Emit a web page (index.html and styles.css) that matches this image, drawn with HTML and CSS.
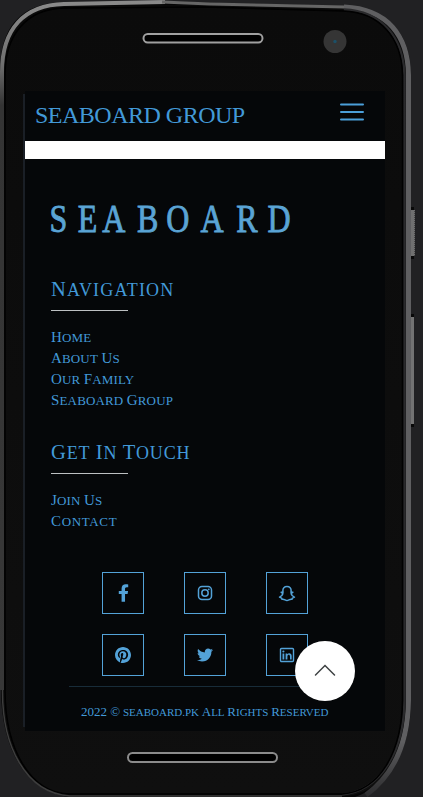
FILE: index.html
```html
<!DOCTYPE html>
<html lang="en">
<head>
<meta charset="utf-8">
<title>Seaboard Group</title>
<link rel="stylesheet" href="styles.css">
</head>
<body>
<div class="stage">
  <svg class="device" viewBox="0 0 423 797" aria-hidden="true">
    <defs>
      <linearGradient id="rim" x1="0" y1="0" x2="0" y2="1">
        <stop offset="0" stop-color="#8a8a8a"/>
        <stop offset=".09" stop-color="#707070"/>
        <stop offset=".15" stop-color="#343434"/>
        <stop offset="1" stop-color="#383838"/>
      </linearGradient>
      <linearGradient id="edge" gradientUnits="userSpaceOnUse" x1="0" y1="0" x2="0" y2="797">
        <stop offset="0" stop-color="#5f5f61"/>
        <stop offset=".93" stop-color="#5f5f61"/>
        <stop offset="1" stop-color="#2c2c2e"/>
      </linearGradient>
      <linearGradient id="glass" x1="0" y1="0" x2="0" y2="1">
        <stop offset="0" stop-color="#0b0b0b"/>
        <stop offset="1" stop-color="#0f0f0f"/>
      </linearGradient>
    </defs>
    <path d="M0 72C0 28 20 3 64 2L165 1L220 3L345 6C390 8 411 35 411 75V700C411 750 390 785 355 797H75C28 797 1 750 1 690L0 690Z" fill="#050505"/>
    <path d="M3 690V72C3 30 25 7 64 6L205 5L345 8C384 9 406 35 407 75V700C407 754 383 793 345 796H75C30 796 3 750 3 690Z" fill="url(#glass)"/>
    <path d="M2 690V72C2 29 24 5 64 4L165 2" fill="none" stroke="url(#rim)" stroke-width="4"/>
    <path d="M162 2L210 4L345 7" fill="none" stroke="#666" stroke-width="3"/>
    <path d="M344 7C388 9 408 36 408.500 75V700C408 745 392 776 366 795" fill="none" stroke="url(#edge)" stroke-width="5"/>
    <path d="M344 9.500C382 11 403 38 404.500 75V700C404 752 380 791 342 794.500" fill="none" stroke="#2a2a2c" stroke-width="2.500"/>
    <path d="M5 690V75C5 34 27 9 64 8L205 7L343 11C380 12 402 38 402.500 75V700C402 752 380 791 342 794H70C31 794 5 750 5 690Z" fill="none" stroke="#010101" stroke-width="1.500"/>
    <path d="M2.500 690C2 745 25 793 70 796H342" fill="none" stroke="#3d3d3d" stroke-width="1.500"/>
    <rect x="411" y="207" width="3" height="52" fill="#080808"/>
    <rect x="411" y="210" width="4" height="46" fill="#707070"/>
    <path d="M414.500 211V256" stroke="#444" stroke-dasharray="1 1"/>
    <rect x="411" y="314" width="3" height="113" fill="#080808"/>
    <rect x="411" y="317" width="3" height="107" fill="#737373"/>
    <rect x="143.500" y="34" width="119" height="8.500" rx="4.250" fill="#000" stroke="#a0a0a0" stroke-width="2"/>
    <rect x="128" y="753" width="149" height="9" rx="4.500" fill="#000" stroke="#8b8b8b" stroke-width="2"/>
    <circle cx="335" cy="41.500" r="11.500" fill="#353535"/>
    <circle cx="335" cy="41.500" r="1.700" fill="#1c5068"/>
    <path d="M24 94V727" stroke="#1a1f26" stroke-width="2"/>
  </svg>

  <main class="screen">
    <header class="bar">
      <span class="brand">SEABOARD GROUP</span>
      <svg class="burger" width="24" height="20" viewBox="0 0 24 20"><path d="M1 2.500H23M1 10H23M1 17.500H23"/></svg>
    </header>
    <div class="strip"></div>
    <footer class="footer">
      <svg class="logo" width="246" height="32" viewBox="0 0 246 32" role="img" aria-label="Seaboard">
        <text transform="scale(.8 1)" x="-2 33.500 64 107.500 144 187 231.500 270.500" y="29">SEABOARD</text>
      </svg>

      <section class="group">
        <h2 class="heading wide"><span class="word">Navigation</span></h2>
        <ul class="links">
          <li><span class="word">Home</span></li>
          <li><span class="word">About</span> <span class="word">Us</span></li>
          <li><span class="word">Our</span> <span class="word">Family</span></li>
          <li><span class="word">Seaboard</span> <span class="word">Group</span></li>
        </ul>
      </section>
      <section class="group">
        <h2 class="heading"><span class="word">Get</span> <span class="word">In</span> <span class="word">Touch</span></h2>
        <ul class="links">
          <li><span class="word">Join</span> <span class="word">Us</span></li>
          <li><span class="word wide">Contact</span></li>
        </ul>
      </section>

      <div class="social">
        <a class="tile"><svg width="11" height="18" viewBox="0 0 320 512"><path d="M279.14 288l14.22-92.66h-88.91v-60.13c0-25.35 12.42-50.06 52.24-50.06h40.42V6.26S260.43 0 225.36 0c-73.22 0-121.08 44.38-121.08 124.72v70.62H22.89V288h81.39v224h100.17V288z"/></svg></a>
        <a class="tile"><svg class="line" width="16" height="16" viewBox="0 0 16 16"><rect x="1.500" y="1.500" width="13" height="13" rx="3.500"/><circle cx="8" cy="8" r="3.200"/><circle class="dot" cx="11.800" cy="4.300" r=".9"/></svg></a>
        <a class="tile"><svg class="line" width="18" height="17" viewBox="0 0 18 17"><path d="M9 1.600C6.200 1.600 4.800 3.500 4.900 5.500L5 7.500L3.100 7.200L4.900 8.700C4.300 10.500 3.200 11.600 1.500 12.100L3.600 13.100L4 14.300C6.400 13.700 7.200 15.500 9 15.500C10.800 15.500 11.600 13.700 14 14.300L14.400 13.100L16.500 12.100C14.800 11.600 13.700 10.500 13.100 8.700L14.900 7.200L13 7.500L13.100 5.500C13.200 3.500 11.800 1.600 9 1.600Z"/></svg></a>
        <a class="tile"><svg width="16" height="16" viewBox="0 8 496 496"><path d="M496 256c0 137-111 248-248 248-25.600 0-50.200-3.900-73.400-11.100 10.100-16.500 25.200-43.500 30.800-65 3-11.600 15.400-59 15.400-59 8.100 15.400 31.700 28.500 56.800 28.500 74.800 0 128.700-68.800 128.700-154.300 0-81.900-66.900-143.200-152.900-143.200-107 0-163.900 71.800-163.900 150.100 0 36.400 19.400 81.700 50.300 96.100 4.700 2.200 7.200 1.200 8.300-3.300.8-3.400 5-20.300 6.900-28.100.6-2.500.3-4.700-1.700-7.100-10.100-12.500-18.300-35.300-18.300-56.600 0-54.700 41.400-107.600 112-107.600 60.900 0 103.600 41.500 103.600 100.900 0 67.100-33.900 113.600-78 113.600-24.300 0-42.600-20.100-36.700-44.800 7-29.500 20.500-61.300 20.500-82.600 0-19-10.200-34.900-31.400-34.900-24.900 0-44.900 25.700-44.900 60.200 0 22 7.400 36.800 7.400 36.800s-24.500 103.800-29 123.200c-5 21.400-3 51.600-.9 71.200C65.400 450.900 0 361.100 0 256 0 119 111 8 248 8s248 111 248 248z"/></svg></a>
        <a class="tile"><svg width="16" height="16" viewBox="0 0 512 512"><path d="M459.370 151.716c.325 4.548.325 9.097.325 13.645 0 138.720-105.583 298.558-298.558 298.558-59.452 0-114.680-17.219-161.137-47.106 8.447.974 16.568 1.299 25.340 1.299 49.055 0 94.213-16.568 130.274-44.832-46.132-.975-84.792-31.188-98.112-72.772 6.498.974 12.995 1.624 19.818 1.624 9.421 0 18.843-1.300 27.614-3.573-48.081-9.747-84.143-51.980-84.143-102.985v-1.299c13.969 7.797 30.214 12.670 47.431 13.319-28.264-18.843-46.781-51.005-46.781-87.391 0-19.492 5.197-37.360 14.294-52.954 51.655 63.675 129.300 105.258 216.365 109.807-1.624-7.797-2.599-15.918-2.599-24.040 0-57.828 46.782-104.934 104.934-104.934 30.213 0 57.502 12.670 76.670 33.137 23.715-4.548 46.456-13.320 66.599-25.340-7.798 24.366-24.366 44.833-46.132 57.827 21.117-2.273 41.584-8.122 60.426-16.243-14.292 20.791-32.161 39.308-52.628 54.253z"/></svg></a>
        <a class="tile"><svg width="16" height="16" viewBox="0 0 16 16"><rect class="outline" x="1.500" y="1.500" width="13" height="13" rx="1"/><circle cx="4.400" cy="4.500" r="1.100"/><path d="M3.500 6.500H5.300V12.500H3.500ZM6.600 6.500H8.300V7.300C9.500 5.700 12.700 6 12.700 9V12.500H11V9.400C11 7.300 8.400 7.300 8.400 9.400V12.500H6.600Z"/></svg></a>
      </div>
      <div class="rule"></div>
      <p class="copyright"><span class="year">2022 ©</span> <span class="plain">seaboard.pk</span> <span class="word">All</span> <span class="word">Rights</span> <span class="word">Reserved</span></p>
    </footer>
    <button class="top" aria-label="Back to top"><svg width="24" height="14" viewBox="0 0 24 14"><path d="M2.500 12L12 2.500L21.500 12"/></svg></button>
  </main>
</div>
</body>
</html>
```
FILE: styles.css
```css
* { box-sizing: border-box; }
body {
  margin: 0;
  background: #212123;
  color: #4299d8;
  font-family: "Liberation Serif", serif;
}
.stage {
  position: relative;
  width: 423px;
  height: 797px;
  padding: 91px 0 0 25px;
  overflow: hidden;
}
.device { position: absolute; inset: 0; width: 423px; height: 797px; }
.screen {
  position: relative;
  width: 360px;
  height: 640px;
  background: #050709;
}
.bar {
  display: flex;
  align-items: center;
  justify-content: space-between;
  height: 50px;
  padding: 0 21px 3px 10px;
}
.brand { font-size: 24px; line-height: 30px; letter-spacing: -.5px; white-space: nowrap; }
.burger { margin-top: -5px; }
.burger path { fill: none; stroke: #4b9fd9; stroke-width: 2; stroke-linecap: round; }
.strip { height: 18px; background: #fff; }
.footer { padding: 44px 26px 0; }
.logo { display: block; overflow: visible; }
.logo text { font-size: 40px; fill: #5aa4d5; stroke: #5aa4d5; stroke-width: .9px; }

.word { display: inline-block; text-transform: uppercase; }
.heading {
  margin: 0;
  font-size: 18px;
  font-weight: 400;
  line-height: 24px;
  letter-spacing: .85px;
}
.heading.wide { letter-spacing: 1.200px; }
.heading .word::first-letter { font-size: 20.500px; }
.heading::after {
  content: "";
  display: block;
  width: 77px;
  height: 1px;
  margin-top: 8px;
  background: #bdc0c2;
}
.group { padding-top: 42px; }
.group + .group { padding-top: 29px; }
.links { margin: 0; padding: 16px 0 0; list-style: none; font-size: 13px; letter-spacing: .15px; }
.links li { height: 21px; line-height: 21px; }
.links .word::first-letter { font-size: 15px; }
.links .wide { letter-spacing: .65px; }

.social {
  display: grid;
  grid-template-columns: repeat(3, 42px);
  gap: 20px 40px;
  margin: 40px 0 0 51px;
}
.tile {
  display: flex;
  align-items: center;
  justify-content: center;
  height: 42px;
  border: 1px solid #53a2d8;
}
.tile svg { fill: #53a2d8; }
.tile .line { fill: none; stroke: #53a2d8; stroke-width: 1.500; stroke-linejoin: round; }
.tile .dot { fill: #53a2d8; stroke: none; }
.tile .outline { fill: none; stroke: #53a2d8; stroke-width: 1.400; }
.rule { height: 1px; margin: 10px 18px 0; background: #182c39; }
.copyright {
  margin: 15px 0 0 30px;
  font-size: 11px;
  line-height: 20px;
  white-space: nowrap;
}
.copyright .year, .copyright .word::first-letter { font-size: 13px; }
.plain { text-transform: uppercase; }
.top {
  position: absolute;
  left: 270px;
  top: 550px;
  display: flex;
  align-items: center;
  justify-content: center;
  width: 60px;
  height: 60px;
  padding: 0 0 3px;
  border: 0;
  border-radius: 50%;
  background: #fff;
}
.top path { fill: none; stroke: #3f4244; stroke-width: 1.500; stroke-linecap: round; }
```
